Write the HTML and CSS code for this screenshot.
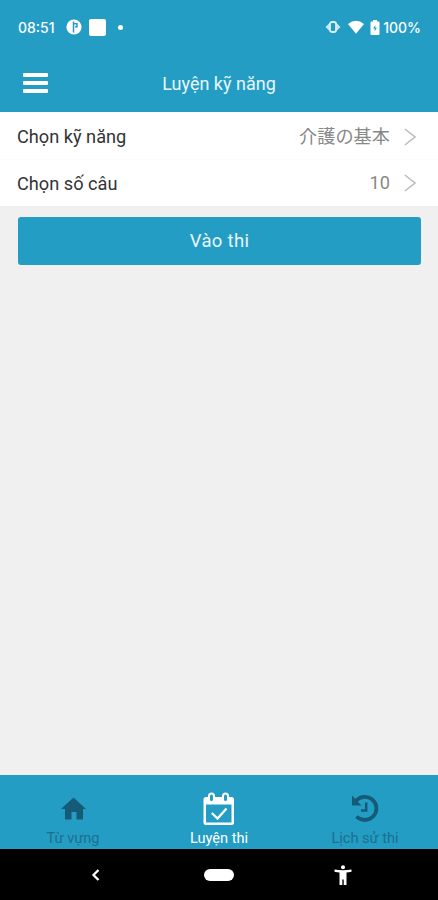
FILE: index.html
```
<!DOCTYPE html>
<html lang="vi">
<head>
  <meta charset="UTF-8" />
  <meta name="viewport" content="width=device-width, initial-scale=1" />
  <title>Luyện kỹ năng</title>
  <link rel="stylesheet" href="styles.css">
</head>
<body>
  <!-- Status bar -->
  <div class="status-bar">
    <span class="time">08:51</span>
    <svg class="app-icon" width="16" height="16" viewBox="0 0 16 16">
      <circle cx="8" cy="8" r="7.6" fill="#fff"/>
      <path d="M7.500 2.500v11M7.500 4.800H11v3H9" fill="none" stroke="#249dc4" stroke-width="1.500"/>
    </svg>
    <span class="square"></span>
    <span class="dot"></span>

    <div class="status-right">
      <svg width="16" height="14" viewBox="0 0 16 14">
        <path d="M5 2.500.5 7 5 11.500zM11 2.500 15.500 7 11 11.500z" fill="#c5e7f2"/>
        <rect x="5" y="2" width="6" height="10" rx="2" fill="#249dc4" stroke="#d9f0f7" stroke-width="1.800"/>
      </svg>
      <svg class="wifi" width="16" height="14" viewBox="0 0 16 14">
        <path d="M0 4Q8-2.500 16 4L8 13.700z" fill="#fff"/>
      </svg>
      <svg class="battery" width="10" height="15" viewBox="0 0 10 15">
        <path d="M3 0h4v1.500h1.500q1 0 1 1V14q0 1-1 1h-7q-1 0-1-1V2.500q0-1 1-1H3z" fill="#fff"/>
        <path d="M5.300 5 3.300 8.500h1.400v2.700L6.900 7.800H5.300z" fill="#249dc4"/>
      </svg>
      <span class="percent">100%</span>
    </div>
  </div>

  <header class="header">
    <button class="menu" aria-label="Menu">
      <span></span>
      <span></span>
      <span></span>
    </button>
    <h1>Luyện kỹ năng</h1>
  </header>

  <!-- Options -->
  <main class="content">
    <div class="row">
      <span class="label">Chọn kỹ năng</span>
      <span class="value">介護の基本</span>
      <svg class="chevron" width="12" height="18" viewBox="0 0 12 18">
        <path d="M.8 1 11 9 .8 17"/>
      </svg>
    </div>
    <div class="row">
      <span class="label">Chọn số câu</span>
      <span class="value">10</span>
      <svg class="chevron" width="12" height="18" viewBox="0 0 12 18">
        <path d="M.8 1 11 9 .8 17"/>
      </svg>
    </div>
    <button class="start">Vào thi</button>
  </main>

  <!-- Tabs -->
  <nav class="tabs">
    <a class="tab">
      <svg width="34" height="34" viewBox="0 0 34 34">
        <path d="M17.500 5.500 30 17H27v10.500h-6.500V20h-5v7.500H9V17H5z" fill="#155b78"/>
      </svg>
      <span>Từ vựng</span>
    </a>
    <a class="tab active">
      <svg width="34" height="34" viewBox="0 0 34 34">
        <rect x="1.500" y="5" width="30.500" height="28" rx="2.500" fill="#fff"/>
        <path d="M4 12.500h25.500v18H4z" fill="#249dc4"/>
        <rect x="7" y="1.500" width="5" height="8.500" rx="2.500" fill="#249dc4" stroke="#fff" stroke-width="2"/>
        <rect x="21" y="1.500" width="5" height="8.500" rx="2.500" fill="#249dc4" stroke="#fff" stroke-width="2"/>
        <path d="M9.800 21 15.500 26.500 24.500 16.500" fill="none" stroke="#fff" stroke-width="2.300"/>
      </svg>
      <span>Luyện thi</span>
    </a>
    <a class="tab">
      <svg width="34" height="34" viewBox="0 0 34 34">
        <path d="M7.500 9.500A11.600 11.600 0 1 1 8.500 24.500" fill="none" stroke="#155b78" stroke-width="3.800"/>
        <path d="M4 3.500v10H13.500z" fill="#155b78"/>
        <path d="M18.200 10.500v8H13" fill="none" stroke="#155b78" stroke-width="2.500"/>
      </svg>
      <span>Lịch sử thi</span>
    </a>
  </nav>

  <!-- System navigation -->
  <div class="system-nav">
    <svg width="10" height="12" viewBox="0 0 10 12">
      <path d="M7.500 1 2.500 6l5 5" fill="none" stroke="#fff" stroke-width="2.300"/>
    </svg>
    <span class="home-pill"></span>
    <svg width="18" height="20" viewBox="0 0 18 20">
      <circle cx="9" cy="2.200" r="2" fill="#fff"/>
      <path d="M.5 4.500q8.500 1.300 17 0v2.200q-3 .7-5 .9V20H9.700v-5.500H8.300V20H5.500V7.600Q3.500 7.400.5 6.700z" fill="#fff"/>
    </svg>
  </div>
</body>
</html>
```
FILE: styles.css
```
html, body {
  height: 100%;
  margin: 0;
  padding: 0;
}

body {
  display: flex;
  flex-direction: column;
  overflow: hidden;
  background-color: #f0f0f0;
  font-family: Roboto, "Noto Sans CJK JP", sans-serif;
}

button {
  border: none;
  padding: 0;
  font-family: inherit;
  cursor: pointer;
}

.status-bar {
  display: flex;
  align-items: center;
  box-sizing: border-box;
  height: 54px;
  padding: 0 17px 0 18px;
  background-color: #249dc4;
  color: white;
  font-family: Inter, sans-serif;
  font-size: 14px;
  font-weight: 500;
}

.time {
  width: 48px;
}

.square {
  width: 17px;
  height: 17px;
  margin-left: 7px;
  border-radius: 2px;
  background-color: white;
}

.dot {
  width: 5px;
  height: 5px;
  margin-left: 12px;
  border-radius: 50%;
  background-color: white;
}

.status-right {
  display: flex;
  align-items: center;
  margin-left: auto;
}

.wifi {
  margin-left: 7px;
}

.battery {
  margin: 0 3px 0 6px;
}

.header {
  display: grid;
  grid-template-columns: 48px 1fr 48px;
  align-items: center;
  height: 58px;
  padding: 0 12px;
  background-color: #249dc4;
}

.menu {
  display: flex;
  flex-direction: column;
  gap: 4px;
  width: 25px;
  margin-left: 11px;
  background: none;
}

.menu span {
  height: 4px;
  border-radius: 1px;
  background-color: white;
}

.header h1 {
  margin: 0;
  color: #e9f6fa;
  font-size: 18px;
  font-weight: 400;
  text-align: center;
}

.content {
  flex: 1;
}

.row {
  display: flex;
  align-items: center;
  box-sizing: border-box;
  height: 47px;
  padding: 2px 22px 0 17px;
  background-color: white;
  font-size: 18.2px;
}

.row + .row {
  padding-top: 0;
  border-top: 1px solid #fafafa;
}

.label {
  color: #333;
}

.value {
  margin-left: auto;
  color: #888;
  line-height: 22px;
}

.chevron {
  margin-left: 14px;
}

.chevron path {
  fill: none;
  stroke: #bbb;
  stroke-width: 1.5;
}

.start {
  display: block;
  width: calc(100% - 35px);
  height: 48px;
  margin: 11px 17px 0 18px;
  border-radius: 3px;
  background-color: #249dc4;
  color: #e9f6fa;
  font-size: 18.5px;
  letter-spacing: 0.3px;
}

.tabs {
  display: grid;
  grid-template-columns: repeat(3, 1fr);
  height: 74px;
  background-color: #249dc4;
}

.tab {
  display: flex;
  flex-direction: column;
  align-items: center;
  padding-top: 17px;
  color: #1b708f;
  font-size: 14.6px;
  line-height: 18px;
}

.tab span {
  margin-top: 3px;
}

.tab.active {
  color: white;
}

.system-nav {
  display: grid;
  grid-template-columns: 1fr 56px 1fr;
  align-items: center;
  justify-items: center;
  height: 51px;
  background-color: black;
}

.home-pill {
  width: 30px;
  height: 12px;
  border-radius: 6px;
  background-color: white;
}
```
